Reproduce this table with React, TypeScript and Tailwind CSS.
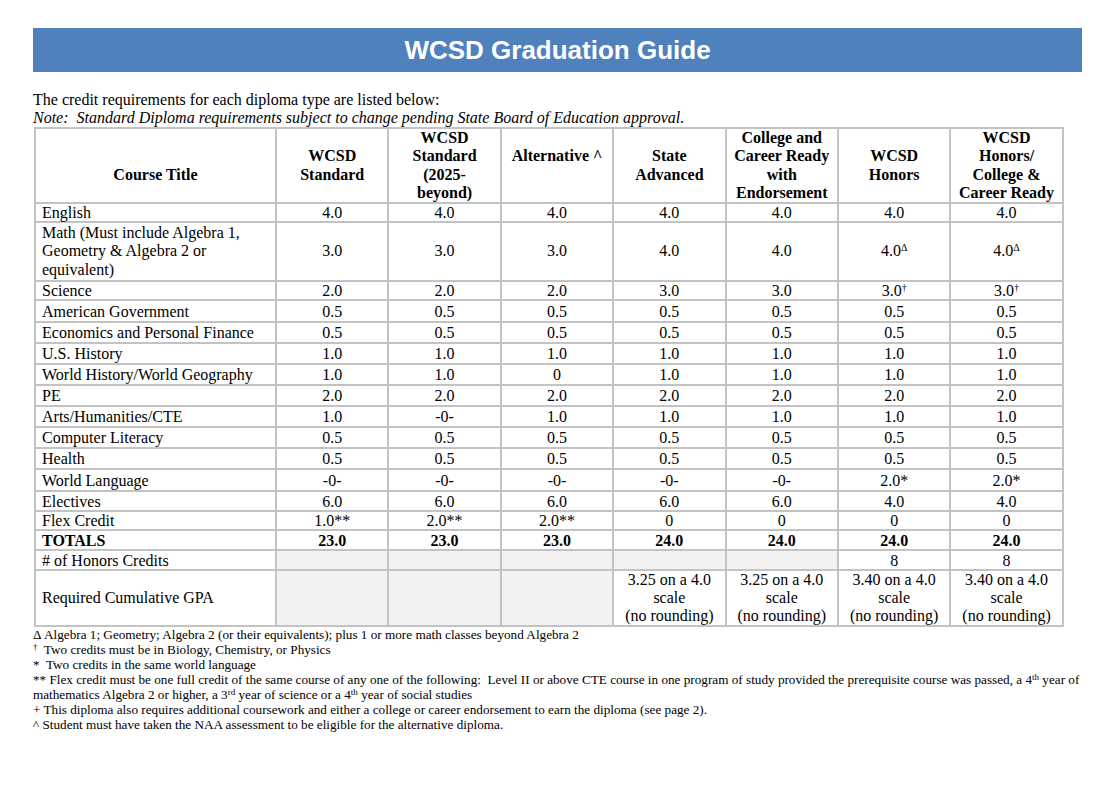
import React from "react";

const serif = { fontFamily: '"Liberation Serif", "Times New Roman", serif' };

type Cell = React.ReactNode | null; // null => gray empty

const Dg = () => <sup className="text-[10px]">Δ</sup>;
const Dag = () => <sup className="text-[10px]">†</sup>;

const headers: React.ReactNode[][] = [
  ["WCSD", "Standard"],
  ["WCSD", "Standard", "(2025-", "beyond)"],
  ["Alternative ^", "\u00a0"],
  ["State", "Advanced"],
  ["College and", "Career Ready", "with", "Endorsement"],
  ["WCSD", "Honors"],
  ["WCSD", "Honors/", "College &", "Career Ready"],
];

const gpa = (v: string) => (
  <>
    {v} on a 4.0
    <br />
    scale
    <br />
    (no rounding)
  </>
);

const rows: { title: React.ReactNode; cells: Cell[]; h: string; lh: string; bold?: boolean }[] = [
  { title: "English", cells: ["4.0", "4.0", "4.0", "4.0", "4.0", "4.0", "4.0"], h: "h-[19px]", lh: "leading-[17px]" },
  {
    title: (
      <>
        Math (Must include Algebra 1,
        <br />
        Geometry &amp; Algebra 2 or
        <br />
        equivalent)
      </>
    ),
    cells: ["3.0", "3.0", "3.0", "4.0", "4.0", <>4.0<Dg /></>, <>4.0<Dg /></>],
    h: "h-[59px]",
    lh: "leading-[18.4px]",
  },
  { title: "Science", cells: ["2.0", "2.0", "2.0", "3.0", "3.0", <>3.0<Dag /></>, <>3.0<Dag /></>], h: "h-[19px]", lh: "leading-[17px]" },
  { title: "American Government", cells: ["0.5", "0.5", "0.5", "0.5", "0.5", "0.5", "0.5"], h: "h-[22px]", lh: "leading-[17px]" },
  { title: "Economics and Personal Finance", cells: ["0.5", "0.5", "0.5", "0.5", "0.5", "0.5", "0.5"], h: "h-[21px]", lh: "leading-[17px]" },
  { title: "U.S. History", cells: ["1.0", "1.0", "1.0", "1.0", "1.0", "1.0", "1.0"], h: "h-[21px]", lh: "leading-[17px]" },
  { title: "World History/World Geography", cells: ["1.0", "1.0", "0", "1.0", "1.0", "1.0", "1.0"], h: "h-[21px]", lh: "leading-[17px]" },
  { title: "PE", cells: ["2.0", "2.0", "2.0", "2.0", "2.0", "2.0", "2.0"], h: "h-[21px]", lh: "leading-[17px]" },
  { title: "Arts/Humanities/CTE", cells: ["1.0", "-0-", "1.0", "1.0", "1.0", "1.0", "1.0"], h: "h-[21px]", lh: "leading-[17px]" },
  { title: "Computer Literacy", cells: ["0.5", "0.5", "0.5", "0.5", "0.5", "0.5", "0.5"], h: "h-[21px]", lh: "leading-[17px]" },
  { title: "Health", cells: ["0.5", "0.5", "0.5", "0.5", "0.5", "0.5", "0.5"], h: "h-[21px]", lh: "leading-[17px]" },
  { title: "World Language", cells: ["-0-", "-0-", "-0-", "-0-", "-0-", "2.0*", "2.0*"], h: "h-[22px]", lh: "leading-[17px]" },
  { title: "Electives", cells: ["6.0", "6.0", "6.0", "6.0", "6.0", "4.0", "4.0"], h: "h-[20px]", lh: "leading-[17px]" },
  { title: "Flex Credit", cells: ["1.0**", "2.0**", "2.0**", "0", "0", "0", "0"], h: "h-[19px]", lh: "leading-[17px]" },
  { title: "TOTALS", cells: ["23.0", "23.0", "23.0", "24.0", "24.0", "24.0", "24.0"], h: "h-[20px]", lh: "leading-[17px]", bold: true },
  { title: "# of Honors Credits", cells: [null, null, null, null, null, "8", "8"], h: "h-[20px]", lh: "leading-[17px]" },
  {
    title: "Required Cumulative GPA",
    cells: [null, null, null, gpa("3.25"), gpa("3.25"), gpa("3.40"), gpa("3.40")],
    h: "h-[56px]",
    lh: "leading-[18px]",
  },
];

export default function App() {
  return (
    <div className="w-[1111px] min-h-[785px] bg-white text-black pt-[28px] pl-[33px]" style={serif}>
      <div className="w-[1049px] h-[44px] bg-[#4f81bd] flex items-center justify-center">
        <span
          className="text-white font-bold text-[26px] leading-none"
          style={{ fontFamily: '"Liberation Sans", Arial, sans-serif' }}
        >
          WCSD Graduation Guide
        </span>
      </div>

      <div className="mt-[19px] text-[16px] leading-[18px]">
        <p>The credit requirements for each diploma type are listed below:</p>
        <p className="italic">
          Note:&nbsp; Standard Diploma requirements subject to change pending State Board of Education approval.
        </p>
      </div>

      <table className="table-fixed border-collapse w-[1028px] text-[16px] ml-px">
        <colgroup>
          <col className="w-[241px]" />
          {headers.map((_, i) => (
            <col key={i} className="w-[112.4px]" />
          ))}
        </colgroup>
        <thead>
          <tr className="h-[75px]">
            <th className="border-2 border-[#c3c3c3] font-bold text-center align-middle px-[4px] py-0 leading-[18.2px]">
              {"\u00a0"}
              <br />
              Course Title
            </th>
            {headers.map((lines, i) => (
              <th
                key={i}
                className="border-2 border-[#c3c3c3] font-bold text-center align-middle px-[2px] py-0 leading-[18.2px]"
              >
                {lines.map((l, j) => (
                  <React.Fragment key={j}>
                    {j > 0 && <br />}
                    {l}
                  </React.Fragment>
                ))}
              </th>
            ))}
          </tr>
        </thead>
        <tbody>
          {rows.map((r, ri) => (
            <tr key={ri} className={r.h}>
              <td
                className={`border-2 border-[#c3c3c3] text-left align-middle pl-[6px] pr-[2px] py-0 ${r.lh} ${
                  r.bold ? "font-bold" : ""
                }`}
              >
                {r.title}
              </td>
              {r.cells.map((c, ci) =>
                c === null ? (
                  <td key={ci} className={`border-2 border-[#c3c3c3] bg-[#f2f2f2] py-0 ${r.lh}`} />
                ) : (
                  <td
                    key={ci}
                    className={`border-2 border-[#c3c3c3] text-center align-middle px-[2px] py-0 ${r.lh} ${
                      r.bold ? "font-bold" : ""
                    }`}
                  >
                    {c}
                  </td>
                )
              )}
            </tr>
          ))}
        </tbody>
      </table>

      <div className="text-[13.2px] leading-[15px] whitespace-nowrap">
        <p>Δ Algebra 1; Geometry; Algebra 2 (or their equivalents); plus 1 or more math classes beyond Algebra 2</p>
        <p>
          <sup className="text-[9px]">†</sup>&nbsp; Two credits must be in Biology, Chemistry, or Physics
        </p>
        <p>*&nbsp; Two credits in the same world language</p>
        <p>
          ** Flex credit must be one full credit of the same course of any one of the following:&nbsp; Level II or above
          CTE course in one program of study provided the prerequisite course was passed, a 4
          <sup className="text-[9px]">th</sup> year of
        </p>
        <p>
          mathematics Algebra 2 or higher, a 3<sup className="text-[9px]">rd</sup> year of science or a 4
          <sup className="text-[9px]">th</sup> year of social studies
        </p>
        <p>
          + This diploma also requires additional coursework and either a college or career endorsement to earn the
          diploma (see page 2).
        </p>
        <p>^ Student must have taken the NAA assessment to be eligible for the alternative diploma.</p>
      </div>
    </div>
  );
}
